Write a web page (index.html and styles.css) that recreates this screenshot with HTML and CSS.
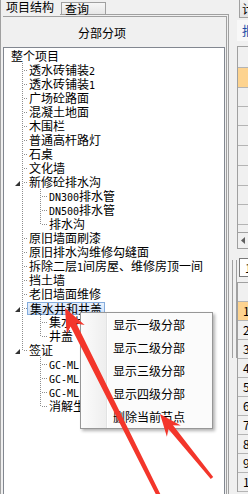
FILE: index.html
```html
<!DOCTYPE html>
<html>
<head>
<meta charset="utf-8">
<link rel="stylesheet" href="styles.css">
</head>
<body>
<div class="left">
  <div class="tabs">
    <div class="tab on">项目结构</div>
    <div class="tab">查询</div>
  </div>
  <div class="frame">
    <div class="inner">
      <div class="head">分部分项</div>
      <div class="tree">
        <div class="row root"><span class="tx">整个项目</span></div>
        <div class="row"><span class="sp"></span><span class="cn"></span><span class="tx">透水砖铺装<span class="lat">2</span></span></div>
        <div class="row"><span class="sp"></span><span class="cn"></span><span class="tx">透水砖铺装<span class="lat">1</span></span></div>
        <div class="row"><span class="sp"></span><span class="cn"></span><span class="tx">广场砼路面</span></div>
        <div class="row"><span class="sp"></span><span class="cn"></span><span class="tx">混凝土地面</span></div>
        <div class="row"><span class="sp"></span><span class="cn"></span><span class="tx">木围栏</span></div>
        <div class="row"><span class="sp"></span><span class="cn"></span><span class="tx">普通高杆路灯</span></div>
        <div class="row"><span class="sp"></span><span class="cn"></span><span class="tx">石桌</span></div>
        <div class="row"><span class="sp"></span><span class="cn"></span><span class="tx">文化墙</span></div>
        <div class="row"><span class="sp"><svg class="tri" width="5" height="5" viewBox="0 0 5 5"><polygon points="5,0 5,5 0,5" fill="#333"/></svg></span><span class="cn"></span><span class="tx">新修砼排水沟</span></div>
        <div class="row"><span class="sp"></span><span class="ps"></span><span class="cn2"></span><span class="tx"><span class="lat">DN300</span>排水管</span></div>
        <div class="row"><span class="sp"></span><span class="ps"></span><span class="cn2"></span><span class="tx"><span class="lat">DN500</span>排水管</span></div>
        <div class="row"><span class="sp"></span><span class="ps"></span><span class="cn2 half"></span><span class="tx">排水沟</span></div>
        <div class="row"><span class="sp"></span><span class="cn"></span><span class="tx">原旧墙面刷漆</span></div>
        <div class="row"><span class="sp"></span><span class="cn"></span><span class="tx">原旧排水沟维修勾缝面</span></div>
        <div class="row"><span class="sp"></span><span class="cn"></span><span class="tx">拆除二层<span class="lat">1</span>间房屋、维修房顶一间</span></div>
        <div class="row"><span class="sp"></span><span class="cn"></span><span class="tx">挡土墙</span></div>
        <div class="row"><span class="sp"></span><span class="cn"></span><span class="tx">老旧墙面维修</span></div>
        <div class="row"><span class="sp"><svg class="tri" width="5" height="5" viewBox="0 0 5 5"><polygon points="5,0 5,5 0,5" fill="#333"/></svg></span><span class="cn"></span><span class="tx picked">集水井和井盖</span></div>
        <div class="row"><span class="sp"></span><span class="ps"></span><span class="cn2"></span><span class="tx">集水井</span></div>
        <div class="row"><span class="sp"></span><span class="ps"></span><span class="cn2 half"></span><span class="tx">井盖</span></div>
        <div class="row"><span class="sp"><svg class="tri" width="5" height="5" viewBox="0 0 5 5"><polygon points="5,0 5,5 0,5" fill="#333"/></svg></span><span class="cn half"></span><span class="tx">签证</span></div>
        <div class="row"><span class="sp"></span><span class="ps none"></span><span class="cn2"></span><span class="tx"><span class="lat">GC-ML-001</span>签证</span></div>
        <div class="row"><span class="sp"></span><span class="ps none"></span><span class="cn2"></span><span class="tx"><span class="lat">GC-ML-002</span>签证</span></div>
        <div class="row"><span class="sp"></span><span class="ps none"></span><span class="cn2"></span><span class="tx"><span class="lat">GC-ML-003</span>签证</span></div>
        <div class="row"><span class="sp"></span><span class="ps none"></span><span class="cn2 half"></span><span class="tx">消解生产签证</span></div>
      </div>
    </div>
  </div>
</div>
<div class="right">
  <div class="rtab">计价</div>
  <div class="rtool">报表</div>
  <div class="grid g1">
    <div class="c h20"></div>
    <div class="c osel"></div>
    <div class="c r18"></div>
    <div class="c r18"></div>
    <div class="c r19"></div>
    <div class="c r19"></div>
    <div class="c r19"></div>
    <div class="c r18"></div>
    <div class="c r19"></div>
    <div class="part"></div>
    <div class="hs"><svg class="larr" width="4" height="7" viewBox="0 0 4 7"><polygon points="4,0 4,7 0,3.5" fill="#606060"/></svg></div>
  </div>
  <div class="lower">
    <div class="gut"><div class="vbar"></div></div>
    <div class="lcol">
      <div class="spin">1</div>
      <div class="grid g2">
        <div class="c"></div>
        <div class="c osel">1</div>
        <div class="c">2</div>
        <div class="c">3</div>
        <div class="c">4</div>
        <div class="c">5</div>
        <div class="c">6</div>
        <div class="c">7</div>
        <div class="c">8</div>
        <div class="c">9</div>
        <div class="c">10</div>
      </div>
    </div>
  </div>
</div>
<div class="menu">
  <div class="mi">显示一级分部</div>
  <div class="mi">显示二级分部</div>
  <div class="mi">显示三级分部</div>
  <div class="mi">显示四级分部</div>
  <div class="mi">删除当前节点</div>
</div>
<svg class="ann" width="248" height="494" viewBox="0 0 248 494">
  <path d="M65 308 L84.7 325 L76.4 323.6 L162.9 499.3 L159.3 501.1 L70.6 326.4 L66.8 333.9 Z" fill="#f3362b"/>
  <path d="M160 414 L180.8 425.4 L173 425.3 L213.2 477.1 L210.8 478.9 L168.4 429.1 L166.9 436.7 Z" fill="#f3362b"/>
</svg>
</body>
</html>
```

FILE: styles.css
```css
html, body {
  margin: 0;
  padding: 0;
}
body {
  width: 248px;
  height: 494px;
  overflow: hidden;
  position: relative;
  display: flex;
  background: #f0f0f0;
  font-family: "Noto Sans CJK SC", sans-serif;
  font-size: 12px;
  color: #000;
}
.left {
  width: 229px;
  flex: none;
  height: 494px;
  display: flex;
  flex-direction: column;
}
.tabs {
  display: flex;
  height: 14px;
  position: relative;
  z-index: 1;
}
.tab {
  box-sizing: border-box;
  white-space: nowrap;
}
.tab.on {
  width: 60px;
  height: 16px;
  border-left: 1px solid #a0a0a0;
  padding-left: 5px;
  line-height: 14px;
  background: #f0f0f0;
}
.tab:not(.on) {
  margin: 2px 0 0 1px;
  width: 45px;
  height: 12px;
  border: 1px solid #a0a0a0;
  border-bottom: none;
  padding-left: 3px;
  line-height: 11px;
  background: linear-gradient(#f7f7f7, #e6e6e6);
}
.frame {
  flex: 1;
  min-height: 0;
  border: 1px solid #a0a0a0;
  border-bottom: none;
  padding: 1px 1px 0 2px;
  display: flex;
  flex-direction: column;
}
.inner {
  flex: 1;
  min-height: 0;
  border-top: 1px solid #a0a0a0;
  border-right: 1px solid #a0a0a0;
  padding: 3px 1px 0 0;
  display: flex;
  flex-direction: column;
}
.head {
  height: 27px;
  flex: none;
  line-height: 25px;
  padding-left: 75px;
  box-sizing: border-box;
  white-space: nowrap;
}
.tree {
  flex: 1;
  min-height: 0;
  background: #fff;
  border: 1px solid #828790;
  border-bottom: none;
  padding-top: 1px;
  overflow: hidden;
}
.row {
  display: flex;
  height: 14px;
  line-height: 14px;
  white-space: nowrap;
}
.root {
  padding-left: 7px;
}
.tx {
  flex: none;
}
.lat {
  font-family: "DejaVu Sans Mono", monospace;
  font-size: 10px;
}
.sp {
  width: 18px;
  flex: none;
  display: flex;
  justify-content: flex-end;
  align-items: center;
}
.tri {
  display: block;
  margin: 3px 2px 0 0;
}
.cn, .cn2, .ps {
  flex: none;
  height: 14px;
}
.cn {
  width: 7px;
  background:
    repeating-linear-gradient(to bottom, #8e8e8e 0 1px, transparent 1px 2px) 0 0 / 1px 14px no-repeat,
    repeating-linear-gradient(to right, #8e8e8e 0 1px, transparent 1px 2px) 2px 7px / 4px 1px no-repeat;
}
.cn2 {
  width: 9px;
  background:
    repeating-linear-gradient(to bottom, #8e8e8e 0 1px, transparent 1px 2px) 0 0 / 1px 14px no-repeat,
    repeating-linear-gradient(to right, #8e8e8e 0 1px, transparent 1px 2px) 2px 7px / 6px 1px no-repeat;
}
.cn.half {
  background:
    repeating-linear-gradient(to bottom, #8e8e8e 0 1px, transparent 1px 2px) 0 0 / 1px 8px no-repeat,
    repeating-linear-gradient(to right, #8e8e8e 0 1px, transparent 1px 2px) 2px 7px / 4px 1px no-repeat;
}
.cn2.half {
  background:
    repeating-linear-gradient(to bottom, #8e8e8e 0 1px, transparent 1px 2px) 0 0 / 1px 8px no-repeat,
    repeating-linear-gradient(to right, #8e8e8e 0 1px, transparent 1px 2px) 2px 7px / 6px 1px no-repeat;
}
.ps {
  width: 18px;
  background: repeating-linear-gradient(to bottom, #8e8e8e 0 1px, transparent 1px 2px) 0 0 / 1px 14px no-repeat;
}
.ps.none {
  background: none;
}
.picked {
  align-self: flex-start;
  box-sizing: border-box;
  height: 13px;
  line-height: 11px;
  margin: 1px 0 0 -2px;
  padding: 0 2px;
  border: 1px solid #84acdd;
  background: linear-gradient(#e8f1fc, #cfe1f8);
}

/* right strip */
.right {
  width: 19px;
  flex: none;
  overflow: hidden;
}
.rtab {
  margin-left: 10px;
  width: 40px;
  height: 18px;
  box-sizing: border-box;
  border-left: 1px solid #a0a0a0;
  border-bottom: 1px solid #a0a0a0;
  padding-left: 2px;
  line-height: 17px;
  white-space: nowrap;
  background: linear-gradient(#f3f3f3, #e2e2e2);
}
.rtool {
  margin: 2px 0 0 8px;
  width: 40px;
  height: 21px;
  box-sizing: border-box;
  padding-left: 5px;
  line-height: 21px;
  white-space: nowrap;
  color: #1e4ea8;
  background: #f8f8f8;
}
.grid {
  width: 40px;
  border-left: 1px solid #a0a0a0;
  border-top: 1px solid #a0a0a0;
}
.g1 {
  margin: 5px 0 0 8px;
}
.c {
  border-bottom: 1px solid #b4b4b4;
  background: #f0f0f0;
  white-space: nowrap;
}
.osel {
  background: #fdd38f;
}
.g1 .h20 { height: 20px; }
.g1 .osel { height: 19px; }
.g1 .r18 { height: 18px; }
.g1 .r19 { height: 19px; }
.part {
  height: 7px;
}
.hs {
  height: 15px;
  border-top: 1px solid #a0a0a0;
  border-bottom: 1px solid #a0a0a0;
  display: flex;
  align-items: center;
}
.larr {
  display: block;
  margin-left: 3px;
}
.lower {
  display: flex;
  margin-top: 9px;
}
.gut {
  width: 8px;
  flex: none;
}
.vbar {
  margin: 2px 0 0 3px;
  width: 3px;
  height: 98px;
  border-left: 1px solid #a0a0a0;
  border-right: 1px solid #a0a0a0;
}
.lcol {
  width: 40px;
  flex: none;
}
.spin {
  margin-left: 2px;
  height: 19px;
  box-sizing: border-box;
  border: 1px solid #7a7a7a;
  border-right: none;
  background: #fff;
  padding-left: 5px;
  line-height: 17px;
}
.g2 {
  margin-top: 5px;
}
.g2 .c {
  height: 18px;
  line-height: 18px;
  padding-left: 5px;
}

/* context menu */
.menu {
  position: absolute;
  left: 80px;
  top: 312px;
  width: 133px;
  box-sizing: border-box;
  border: 1px solid #979797;
  background: linear-gradient(to right, #fcfcfc 0, #eeeeee 25px, #e2e3e3 25px, #e2e3e3 26px, #ffffff 26px, #ffffff 27px, #fbfbfb 27px);
  box-shadow: 2px 2px 3px rgba(0, 0, 0, 0.3);
  z-index: 2;
}
.mi {
  height: 23px;
  line-height: 23px;
  padding-left: 32px;
  white-space: nowrap;
}
.ann {
  position: absolute;
  left: 0;
  top: 0;
  z-index: 3;
  pointer-events: none;
}
```
